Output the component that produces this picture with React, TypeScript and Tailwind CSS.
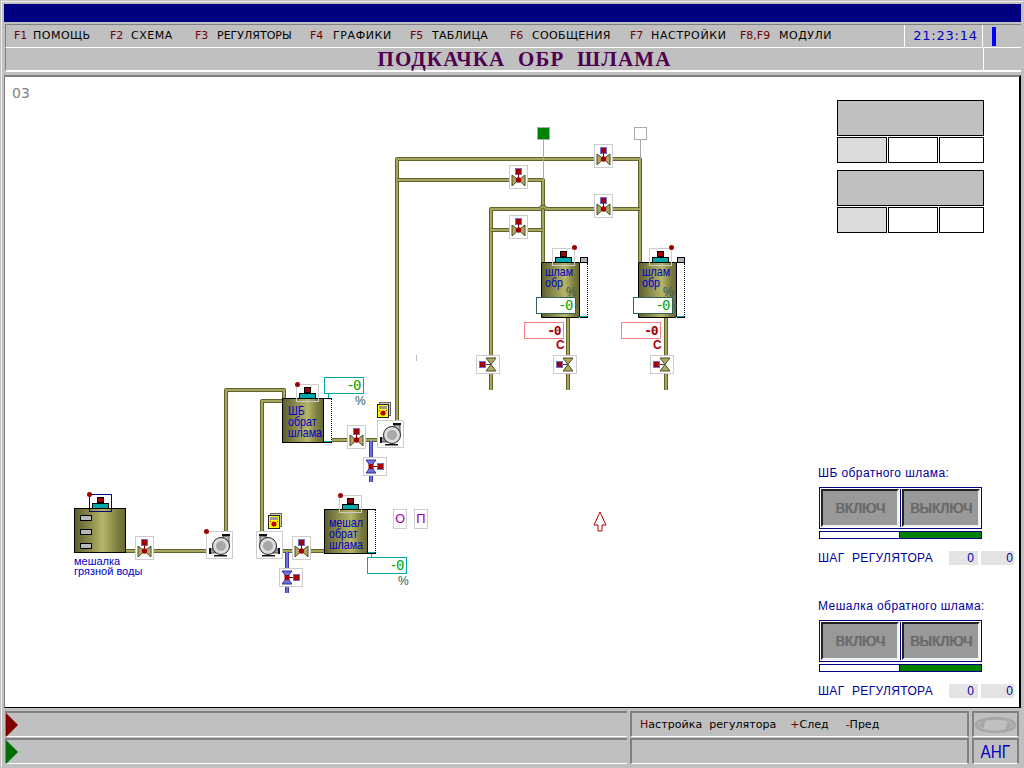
import React from "react";

const sans = "font-['DejaVu_Sans',sans-serif]";
const arial = "font-['Liberation_Sans',sans-serif]";
const mono = "font-['DejaVu_Sans_Mono',monospace]";

const menu = [
  { key: "F1", label: "ПОМОЩЬ", item: "w-[96px]", keyBox: "w-[19px]", track: "tracking-[0.5px]" },
  { key: "F2", label: "СХЕМА", item: "w-[85px]", keyBox: "w-[21px]", track: "tracking-[0.5px]" },
  { key: "F3", label: "РЕГУЛЯТОРЫ", item: "w-[115px]", keyBox: "w-[22px]", track: "tracking-[0px]" },
  { key: "F4", label: "ГРАФИКИ", item: "w-[100px]", keyBox: "w-[23px]", track: "tracking-[0.6px]" },
  { key: "F5", label: "ТАБЛИЦА", item: "w-[100px]", keyBox: "w-[22px]", track: "tracking-[0.25px]" },
  { key: "F6", label: "СООБЩЕНИЯ", item: "w-[120px]", keyBox: "w-[22px]", track: "tracking-[0.35px]" },
  { key: "F7", label: "НАСТРОЙКИ", item: "w-[110px]", keyBox: "w-[21px]", track: "tracking-[0.65px]" },
  { key: "F8,F9", label: "МОДУЛИ", item: "w-[130px]", keyBox: "w-[39px]", track: "tracking-[0.5px]" },
];

// the schematic is a free canvas: positions below are screen coordinates
function At({ x, y, children }: { x: number; y: number; children: React.ReactNode }) {
  return (
    <div className="absolute" style={{ left: x - 5, top: y - 77 }}>
      {children}
    </div>
  );
}

function Pipe({ d, blue }: { d: string; blue?: boolean }) {
  return (
    <g fill="none" strokeLinejoin="round">
      <path d={d} stroke={blue ? "#3c3ca8" : "#62622a"} strokeWidth="4" />
      <path d={d} stroke={blue ? "#7070e0" : "#a6a660"} strokeWidth="2" />
    </g>
  );
}

function Valve() {
  return (
    <svg width="19" height="24" viewBox="0 0 19 24" shapeRendering="crispEdges" className="block">
      <rect x="0.5" y="0.5" width="18" height="23" fill="#fff" stroke="#cccccc" />
      <polygon points="3,10 9.5,15 3,21" fill="#b0a868" stroke="#4c4c20" shapeRendering="auto" />
      <polygon points="16,10 9.5,15 16,21" fill="#b0a868" stroke="#4c4c20" shapeRendering="auto" />
      <rect x="6.5" y="3.5" width="6" height="6" fill="#a00000" stroke="#7070d0" />
      <rect x="9" y="9" width="1" height="5" fill="#800000" />
      <circle cx="9.5" cy="15" r="2.7" fill="#a00000" shapeRendering="auto" />
    </svg>
  );
}

function SideValve({ blue, right }: { blue?: boolean; right?: boolean }) {
  const fill = blue ? "#7070e0" : "#b0a868";
  const edge = blue ? "#30308c" : "#4c4c20";
  const cx = right ? 8 : 15;
  return (
    <svg width="24" height="19" viewBox="0 0 24 19" className="block">
      <rect x="0.5" y="0.5" width="23" height="18" fill="#fff" stroke="#cccccc" shapeRendering="crispEdges" />
      <polygon points={`${cx - 5},3 ${cx + 5},3 ${cx},9.5`} fill={fill} stroke={edge} />
      <polygon points={`${cx - 5},16 ${cx + 5},16 ${cx},9.5`} fill={fill} stroke={edge} />
      {blue && <rect x={cx - 2.5} y="7" width="5" height="5" fill="#a00000" />}
      {right ? (
        <>
          <rect x="10" y="9" width="5" height="1" fill="#800000" />
          <rect x="14.5" y="6.5" width="6" height="6" fill="#a00000" stroke="#7070d0" shapeRendering="crispEdges" />
        </>
      ) : (
        <>
          <rect x="9" y="9" width="6" height="1" fill="#444" />
          <rect x="3.5" y="6.5" width="6" height="6" fill="#a00000" stroke="#7070d0" shapeRendering="crispEdges" />
        </>
      )}
    </svg>
  );
}

function Pump({ flip }: { flip?: boolean }) {
  return (
    <svg width="27" height="28" viewBox="0 0 27 28" className={`block ${flip ? "-scale-x-100" : ""}`}>
      <rect x="0.5" y="0.5" width="26" height="27" fill="#fff" stroke="#cccccc" shapeRendering="crispEdges" />
      <rect x="17" y="5" width="6" height="8" fill="#b8b8b8" stroke="#333" strokeWidth="0.8" />
      <rect x="16" y="3" width="8" height="2" fill="#111" />
      <rect x="4" y="18" width="7" height="4" fill="#999" stroke="#333" strokeWidth="0.8" />
      <rect x="3" y="17" width="2" height="6" fill="#111" />
      <rect x="8" y="24" width="13" height="1.5" fill="#111" />
      <circle cx="15" cy="15" r="8.5" fill="#dddddd" stroke="#222" />
      <circle cx="15" cy="15" r="5" fill="#a8a8a8" />
    </svg>
  );
}

function Meter() {
  return (
    <svg width="14" height="16" viewBox="0 0 14 16" className="block">
      <rect x="2.5" y="0.5" width="11" height="13" fill="#c8c8c8" stroke="#666" />
      <rect x="0.5" y="2.5" width="11" height="13" fill="#ffff00" stroke="#222" shapeRendering="crispEdges" />
      <rect x="2" y="4" width="8" height="3" fill="#999" />
      <circle cx="6" cy="11" r="2.6" fill="#c00000" />
      <rect x="2" y="8" width="1" height="1" fill="#c00000" />
      <rect x="9" y="8" width="1" height="1" fill="#c00000" />
    </svg>
  );
}

function Agitator({ framed }: { framed?: boolean }) {
  return (
    <div className={`relative w-[23px] h-[18px] border ${framed ? "border-[#000080]" : "border-[#cccccc]"}`}>
      <div className="absolute left-[7px] top-[2px] w-[7px] h-[6px] bg-[#a00000] border border-black" />
      <div className="absolute left-[2px] top-[8px] w-[17px] h-[6px] bg-[#00a8a8] border border-black" />
    </div>
  );
}

function Dot({ x, y }: { x: number; y: number }) {
  return (
    <At x={x - 2} y={y - 2}>
      <div className="w-[5px] h-[5px] rounded-full bg-[#a00000]" />
    </At>
  );
}

function Gauge({ h, cap }: { h: string; cap?: boolean }) {
  return (
    <div className={`relative w-[8px] border-y border-black bg-white ${h}`}>
      <div className="absolute right-0 top-0 bottom-0 border-r border-dotted border-black" />
      <div className="absolute left-0 right-[1px] bottom-0 h-[1px] bg-[#00a8a8]" />
      {cap && <div className="absolute -top-[6px] left-0 w-[8px] h-[6px] bg-[#b0b0b0] border border-black" />}
    </div>
  );
}

function Tank({ w, h, lines, textClass }: { w: string; h: string; lines: string[]; textClass: string }) {
  return (
    <div
      className={`border border-black bg-[linear-gradient(90deg,#5e5e2e,#8a8a4a_30%,#b6b668_62%,#7e7e40_85%,#6a6a34)] text-[#0000c8] text-[13px] leading-[11px] whitespace-nowrap ${arial} ${w} ${h} ${textClass}`}
    >
      {lines.map((l) => (
        <div key={l} className="origin-left scale-x-[0.82]">
          {l}
        </div>
      ))}
    </div>
  );
}

function Percent() {
  return <span className={`block text-[12px] leading-[12px] text-[#2a5a5a] ${arial}`}>%</span>;
}

function ValueBox({ red, border }: { red?: boolean; border: string }) {
  return (
    <div
      className={`w-[40px] h-[17px] border bg-white flex items-center justify-end pr-[3px] tracking-[-1.5px] ${mono} ${border} ${
        red ? "text-[13px] font-bold text-[#a00000]" : "text-[14px] text-[#00a800]"
      }`}
    >
      -0
    </div>
  );
}

function ControlGroup({ title, gap }: { title: string; gap: string }) {
  return (
    <div className={`flex flex-col ${gap}`}>
      <div className={`text-[12px] leading-[14px] text-[#0000a0] ${arial} tracking-[0.42px]`}>{title}</div>
      <div className="ml-[1px] mt-[7px] w-[163px] h-[42px] border border-[#000080] bg-white p-[1px] flex">
        <div className="flex-1 flex items-center justify-center bg-[#999999] border-2 border-t-[#222222] border-l-[#222222] border-r-[#f0f0f0] border-b-[#f0f0f0]">
          <span className={`text-[14px] text-[#666666] [text-shadow:1px_0_0_#707070] ${arial}`}>ВКЛЮЧ</span>
        </div>
        <div className="w-[1px] bg-[#000080] mx-[1px]" />
        <div className="flex-1 flex items-center justify-center bg-[#999999] border-2 border-t-[#222222] border-l-[#222222] border-r-[#f0f0f0] border-b-[#f0f0f0]">
          <span className={`text-[14px] text-[#666666] [text-shadow:1px_0_0_#707070] ${arial}`}>ВЫКЛЮЧ</span>
        </div>
      </div>
      <div className="ml-[1px] mt-[2px] w-[163px] h-[8px] border border-[#000080] flex">
        <div className="w-[80px] bg-white border-r border-[#000080]" />
        <div className="flex-1 bg-[#008000]" />
      </div>
      <div className="mt-[12px] flex items-center h-[14px]">
        <div className={`w-[131px] text-[12px] text-[#0000a0] tracking-[0.35px] whitespace-nowrap ${arial}`}>ШАГ&nbsp; РЕГУЛЯТОРА</div>
        <div className={`w-[29px] h-[14px] bg-[#e4e4e4] text-[12px] leading-[14px] text-right pr-[4px] text-[#0000a0] ${arial}`}>0</div>
        <div className={`ml-[3px] w-[33px] h-[14px] bg-[#e4e4e4] text-[12px] leading-[14px] text-right pr-[1px] text-[#0000a0] ${arial}`}>0</div>
      </div>
    </div>
  );
}

function Selector() {
  return (
    <div className="w-[147px] flex flex-col gap-[1px]">
      <div className="h-[36px] border border-black bg-[#c0c0c0]" />
      <div className="flex gap-[1px] h-[26px]">
        <div className="w-[50px] border border-black bg-[#dcdcdc]" />
        <div className="w-[50px] border border-black bg-white" />
        <div className="w-[45px] border border-black bg-white" />
      </div>
    </div>
  );
}

function SludgeTank({ x }: { x: number }) {
  return (
    <>
      <At x={x} y={262}>
        <div className="flex">
          <Tank w="w-[39px]" h="h-[56px]" lines={["шлам", "обр"]} textClass="pl-[3px] pt-[3px] rounded-br-[2px]" />
          <Gauge h="h-[56px]" cap />
        </div>
      </At>
      <At x={x + 11} y={248}>
        <Agitator />
      </At>
      <Dot x={x + 33} y={247} />
      <At x={x + 25} y={286}>
        <Percent />
      </At>
      <At x={x - 5} y={297}>
        <ValueBox border="border-[#306060]" />
      </At>
      <At x={x + 35} y={305}>
        <div className="w-[4px] h-[1px] bg-[#306060]" />
      </At>
      <At x={x - 17} y={322}>
        <ValueBox red border="border-[#ff8080]" />
      </At>
      <At x={x + 15} y={339}>
        <span className={`block text-[12px] font-bold leading-[13px] text-[#b00000] ${arial}`}>С</span>
      </At>
    </>
  );
}

function Schematic() {
  return (
    <div className="relative w-[813px] h-full shrink-0">
      <svg className="absolute inset-0" width="813" height="630" viewBox="5 77 813 630">
        <Pipe d="M397 425 V159 H640 V262" />
        <Pipe d="M397 180 H543 V262" />
        <Pipe d="M491 390 V209 H540 Q543 204 546 209 H640" />
        <Pipe d="M491 230 H543" />
        <Pipe d="M568 316 V390" />
        <Pipe d="M666 316 V390" />
        <Pipe d="M226 533 V390 H284 V398" />
        <Pipe d="M262 533 V401 H284" />
        <Pipe d="M330 440 H380" />
        <Pipe d="M283 551 H325" />
        <Pipe d="M126 551 H208" />
        <Pipe d="M371 441 V482" blue />
        <Pipe d="M287 552 V593" blue />
        <path d="M543.5 140 V180 M640.5 140 V159" stroke="#aaaaaa" fill="none" />
        <path d="M416.5 355 V361" stroke="#bbbbbb" fill="none" />
        <path d="M328.5 393 V398 M371.5 553 V557" stroke="#00a8a8" fill="none" />
        <polygon points="600,512 606,525 602,525 602,531 598,531 598,525 594,525" fill="#fff" stroke="#b00000" />
      </svg>

      <div className={`absolute left-[7px] top-[9px] text-[14px] leading-[14px] text-[#808080] ${sans}`}>03</div>

      <At x={537} y={127}>
        <div className="w-[13px] h-[13px] bg-[#008000] border border-[#aaaaaa]" />
      </At>
      <At x={634} y={127}>
        <div className="w-[13px] h-[13px] bg-white border border-[#aaaaaa]" />
      </At>

      {[
        [594, 144],
        [509, 165],
        [594, 194],
        [509, 215],
        [347, 425],
        [292, 536],
        [135, 536],
      ].map(([x, y]) => (
        <At key={`${x}-${y}`} x={x} y={y}>
          <Valve />
        </At>
      ))}

      <SludgeTank x={541} />
      <SludgeTank x={638} />

      <At x={476} y={355}>
        <SideValve />
      </At>
      <At x={553} y={355}>
        <SideValve />
      </At>
      <At x={650} y={355}>
        <SideValve />
      </At>
      <At x={363} y={457}>
        <SideValve blue right />
      </At>
      <At x={279} y={568}>
        <SideValve blue right />
      </At>

      <At x={282} y={398}>
        <div className="flex">
          <Tank w="w-[42px]" h="h-[45px]" lines={["ШБ", "обрат", "шлама"]} textClass="pl-[5px] pt-[6px]" />
          <Gauge h="h-[45px]" />
        </div>
      </At>
      <At x={296} y={384}>
        <Agitator />
      </At>
      <Dot x={297} y={384} />
      <At x={324} y={377}>
        <ValueBox border="border-[#00a8a8]" />
      </At>
      <At x={355} y={395}>
        <Percent />
      </At>
      <At x={377} y={402}>
        <Meter />
      </At>
      <At x={377} y={420}>
        <Pump />
      </At>

      <At x={324} y={509}>
        <div className="flex">
          <Tank w="w-[44px]" h="h-[45px]" lines={["мешал", "обрат", "шлама"]} textClass="pl-[4px] pt-[7px]" />
          <Gauge h="h-[45px]" />
        </div>
      </At>
      <At x={339} y={495}>
        <Agitator />
      </At>
      <Dot x={340} y={495} />
      <At x={367} y={557}>
        <ValueBox border="border-[#00a8a8]" />
      </At>
      <At x={398} y={575}>
        <Percent />
      </At>
      <At x={268} y={513}>
        <Meter />
      </At>
      <At x={256} y={531}>
        <Pump flip />
      </At>

      <At x={393} y={509}>
        <div className={`w-[14px] h-[20px] border border-[#cccccc] flex items-center justify-center text-[13px] text-[#a800b0] ${sans}`}>О</div>
      </At>
      <At x={414} y={509}>
        <div className={`w-[14px] h-[20px] border border-[#cccccc] flex items-center justify-center text-[13px] text-[#a800b0] ${sans}`}>П</div>
      </At>

      <At x={74} y={508}>
        <div className="flex flex-col gap-[8px] w-[52px] h-[45px] pt-[6px] pl-[5px] border border-black bg-[linear-gradient(90deg,#5e5e2e,#8a8a4a_30%,#b6b668_55%,#7e7e40_85%,#6a6a34)]">
          <div className="w-[12px] h-[6px] bg-[#b8b8b8] border border-black" />
          <div className="w-[12px] h-[6px] bg-[#b8b8b8] border border-black" />
          <div className="w-[12px] h-[6px] bg-[#b8b8b8] border border-black" />
        </div>
      </At>
      <At x={89} y={494}>
        <Agitator framed />
      </At>
      <Dot x={89} y={494} />
      <At x={74} y={556}>
        <div className={`text-[11px] leading-[10px] text-[#0000c8] whitespace-nowrap ${arial}`}>
          <div>мешалка</div>
          <div>грязной воды</div>
        </div>
      </At>
      <At x={206} y={531}>
        <Pump />
      </At>
      <Dot x={206} y={531} />
    </div>
  );
}

export default function App() {
  return (
    <div className="w-[1024px] h-[768px] bg-[#c0c0c0] p-[1px] overflow-hidden">
      <div className="h-full border-t border-l border-[#f0f0f0] pt-[2px] pl-[2px] pr-[2px] flex flex-col">
        <div className="h-[18px] bg-[#000080] shrink-0" />
        <div className="mt-[2px] h-[24px] ml-[1px] border-t border-l border-[#808080] border-b border-b-white flex items-center shrink-0">
          <div className={`w-[898px] pl-[8px] pt-[1px] flex text-[11px] whitespace-nowrap ${sans}`}>
            {menu.map((m) => (
              <div key={m.key} className={`flex ${m.item}`}>
                <span className={`text-[#700000] ${m.keyBox}`}>{m.key}</span>
                <span className={`text-black ${m.track}`}>{m.label}</span>
              </div>
            ))}
          </div>
          <div className={`w-[79px] h-full flex items-center justify-center pl-[4px] border-l border-r border-white text-[13px] tracking-[0.75px] text-[#0000c0] ${sans}`}>
            21:23:14
          </div>
          <div className="ml-[9px] w-[4px] h-[19px] bg-[#0000ff]" />
        </div>
        <div className="h-[24px] ml-[1px] border-l border-[#808080] border-b-2 border-b-white flex shrink-0">
          <div className="w-[978px] pl-[60px] border-r border-white text-center text-[21px] leading-[23px] font-bold text-[#500050] whitespace-nowrap tracking-[1.1px] font-['Liberation_Serif',serif]">
            ПОДКАЧКА&nbsp; ОБР&nbsp; ШЛАМА
          </div>
        </div>

        <div className="mt-[3px] h-[633px] border-t-2 border-l border-[#808080] border-r-2 border-r-black border-b border-b-black bg-white flex shrink-0">
          <Schematic />
          <div className="flex-1 flex flex-col">
            <div className="ml-[19px] mt-[23px] flex flex-col gap-[7px]">
              <Selector />
              <Selector />
            </div>
            <div className="mt-[233px] flex flex-col">
              <ControlGroup title="ШБ обратного шлама:" gap="" />
              <ControlGroup title="Мешалка обратного шлама:" gap="mt-[34px]" />
            </div>
          </div>
        </div>

        <div className="mt-[3px] flex flex-col gap-[1px] ml-[1px] shrink-0">
          {["#800000", "#006f00"].map((color, i) => (
            <div key={color} className="h-[26px] flex gap-[3px] pr-[1px]">
              <div className="relative w-[622px] border-t-2 border-l border-[#808080] border-b border-b-white">
                <svg className="absolute left-0 top-0" width="13" height="24" viewBox="0 0 13 24">
                  <polygon points="0,0 12,12 0,24" fill={color} />
                </svg>
              </div>
              <div className={`w-[339px] border-t-2 border-x-2 border-[#808080] border-b border-b-white flex items-center pl-[8px] pt-[2px] text-[11px] whitespace-nowrap text-black ${sans}`}>
                {i === 0 && (
                  <>
                    <span className="tracking-[0.05px]">
                      <span className="text-[#700000]">Н</span>астройка&nbsp; регулятора
                    </span>
                    <span className="ml-[14px] text-[#700000]">+</span>
                    <span>След</span>
                    <span className="ml-[17px] text-[#700000]">-</span>
                    <span>Пред</span>
                  </>
                )}
              </div>
              <div className={`w-[47px] border-t-2 border-x-2 border-[#808080] border-b border-b-white flex items-center justify-center ${arial}`}>
                {i === 0 ? (
                  <svg width="44" height="22" viewBox="0 0 44 22">
                    <ellipse cx="22" cy="11" rx="20" ry="7" fill="none" stroke="#a8a8a8" strokeWidth="3" />
                    <polygon points="2,12 12,5 10,14" fill="#a8a8a8" />
                    <polygon points="42,10 32,17 34,8" fill="#a8a8a8" />
                  </svg>
                ) : (
                  <span className="inline-block scale-x-[0.85] text-[18px] leading-[20px] text-[#0000c0]">АНГ</span>
                )}
              </div>
            </div>
          ))}
        </div>
      </div>
    </div>
  );
}
